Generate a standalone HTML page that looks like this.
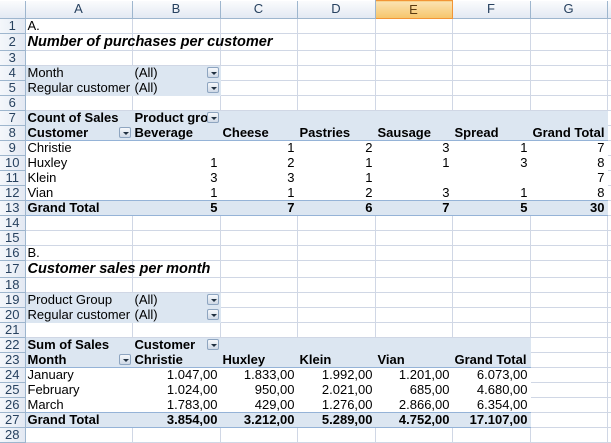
<!DOCTYPE html>
<html><head><meta charset="utf-8"><style>
body{margin:0;width:611px;height:433px;overflow:hidden;background:#fff;font-family:"Liberation Sans",Arial,sans-serif;font-size:13px;color:#000;position:relative}
table{border-collapse:collapse;table-layout:fixed;position:absolute;left:0;top:0;width:617px}
td{padding:0 2px;white-space:nowrap;overflow:hidden;border-right:1px solid #d0d7e5;border-bottom:1px solid #d0d7e5;height:15px;line-height:14px;position:relative;box-sizing:border-box}
tr.h td{height:18px;background:linear-gradient(#fbfcfd,#e3e9f3);border-color:#9eb6ce;text-align:center;color:#27415f;border-bottom:1px solid #9eb6ce}
tr.h td.sel{background:linear-gradient(#fbe3b3,#f6c56a);border:1px solid #f29536;color:#5a3a10}
td.rh{background:linear-gradient(90deg,#f4f7fb,#e3e9f3);border-right:1px solid #9eb6ce;border-bottom:1px solid #9eb6ce;text-align:center;color:#27415f;padding:0}
tr.t td{height:17px}
.p{background:#dce6f1;border-color:#dce6f1}
.w{border-color:#fff}
.r{text-align:right}
.b{font-weight:bold}
.bb{border-bottom:1px solid #95b3d7}
.dd{position:absolute;right:1px;top:1px;width:12px;height:11px;border:1px solid #8ea5c0;border-radius:2px;background:linear-gradient(#f6f8fb,#cfd9e6);box-sizing:border-box}
.dd:after{content:"";position:absolute;left:3px;top:4px;border-left:3px solid transparent;border-right:3px solid transparent;border-top:3px solid #203040}
.ti{font-weight:bold;font-style:italic;font-size:14.5px;overflow:visible}
</style></head><body>
<table>
<colgroup><col style="width:25px"><col style="width:107px"><col style="width:88px"><col style="width:77px"><col style="width:78px"><col style="width:77px"><col style="width:78px"><col style="width:77px"><col style="width:10px"></colgroup>
<tr class="h"><td></td><td>A</td><td>B</td><td>C</td><td>D</td><td class="sel">E</td><td>F</td><td>G</td><td></td></tr>
<tr><td class="rh">1</td><td>A.</td><td></td><td></td><td></td><td></td><td></td><td></td><td></td></tr>
<tr class="t"><td class="rh">2</td><td class="ti">Number of purchases per customer</td><td></td><td></td><td></td><td></td><td></td><td></td><td></td></tr>
<tr><td class="rh">3</td><td></td><td></td><td></td><td></td><td></td><td></td><td></td><td></td></tr>
<tr><td class="rh">4</td><td class="p">Month</td><td class="p">(All)<span class="dd"></span></td><td></td><td></td><td></td><td></td><td></td><td></td></tr>
<tr><td class="rh">5</td><td class="p">Regular customer</td><td class="p">(All)<span class="dd"></span></td><td></td><td></td><td></td><td></td><td></td><td></td></tr>
<tr><td class="rh">6</td><td></td><td></td><td></td><td></td><td></td><td></td><td></td><td></td></tr>
<tr><td class="rh">7</td><td class="p b">Count of Sales</td><td class="p b">Product grou<span class="dd"></span></td><td class="p"></td><td class="p"></td><td class="p"></td><td class="p"></td><td class="p"></td><td></td></tr>
<tr><td class="rh">8</td><td class="p b bb">Customer<span class="dd"></span></td><td class="p b bb">Beverage</td><td class="p b bb">Cheese</td><td class="p b bb">Pastries</td><td class="p b bb">Sausage</td><td class="p b bb">Spread</td><td class="p b bb">Grand Total</td><td></td></tr>
<tr><td class="rh">9</td><td class="w">Christie</td><td class="w r"></td><td class="w r">1</td><td class="w r">2</td><td class="w r">3</td><td class="w r">1</td><td class="w r">7</td><td></td></tr>
<tr><td class="rh">10</td><td class="w">Huxley</td><td class="w r">1</td><td class="w r">2</td><td class="w r">1</td><td class="w r">1</td><td class="w r">3</td><td class="w r">8</td><td></td></tr>
<tr><td class="rh">11</td><td class="w">Klein</td><td class="w r">3</td><td class="w r">3</td><td class="w r">1</td><td class="w r"></td><td class="w r"></td><td class="w r">7</td><td></td></tr>
<tr><td class="rh">12</td><td class="w bb">Vian</td><td class="w r bb">1</td><td class="w r bb">1</td><td class="w r bb">2</td><td class="w r bb">3</td><td class="w r bb">1</td><td class="w r bb">8</td><td></td></tr>
<tr><td class="rh">13</td><td class="p b bb">Grand Total</td><td class="p b r bb">5</td><td class="p b r bb">7</td><td class="p b r bb">6</td><td class="p b r bb">7</td><td class="p b r bb">5</td><td class="p b r bb">30</td><td></td></tr>
<tr><td class="rh">14</td><td></td><td></td><td></td><td></td><td></td><td></td><td></td><td></td></tr>
<tr><td class="rh">15</td><td></td><td></td><td></td><td></td><td></td><td></td><td></td><td></td></tr>
<tr><td class="rh">16</td><td>B.</td><td></td><td></td><td></td><td></td><td></td><td></td><td></td></tr>
<tr class="t"><td class="rh">17</td><td class="ti">Customer sales per month</td><td></td><td></td><td></td><td></td><td></td><td></td><td></td></tr>
<tr><td class="rh">18</td><td></td><td></td><td></td><td></td><td></td><td></td><td></td><td></td></tr>
<tr><td class="rh">19</td><td class="p">Product Group</td><td class="p">(All)<span class="dd"></span></td><td></td><td></td><td></td><td></td><td></td><td></td></tr>
<tr><td class="rh">20</td><td class="p">Regular customer</td><td class="p">(All)<span class="dd"></span></td><td></td><td></td><td></td><td></td><td></td><td></td></tr>
<tr><td class="rh">21</td><td></td><td></td><td></td><td></td><td></td><td></td><td></td><td></td></tr>
<tr><td class="rh">22</td><td class="p b">Sum of Sales</td><td class="p b">Customer<span class="dd"></span></td><td class="p"></td><td class="p"></td><td class="p"></td><td class="p"></td><td></td><td></td></tr>
<tr><td class="rh">23</td><td class="p b bb">Month<span class="dd"></span></td><td class="p b bb">Christie</td><td class="p b bb">Huxley</td><td class="p b bb">Klein</td><td class="p b bb">Vian</td><td class="p b bb">Grand Total</td><td></td><td></td></tr>
<tr><td class="rh">24</td><td class="w">January</td><td class="w r">1.047,00</td><td class="w r">1.833,00</td><td class="w r">1.992,00</td><td class="w r">1.201,00</td><td class="w r">6.073,00</td><td></td><td></td></tr>
<tr><td class="rh">25</td><td class="w">February</td><td class="w r">1.024,00</td><td class="w r">950,00</td><td class="w r">2.021,00</td><td class="w r">685,00</td><td class="w r">4.680,00</td><td></td><td></td></tr>
<tr><td class="rh">26</td><td class="w bb">March</td><td class="w r bb">1.783,00</td><td class="w r bb">429,00</td><td class="w r bb">1.276,00</td><td class="w r bb">2.866,00</td><td class="w r bb">6.354,00</td><td></td><td></td></tr>
<tr><td class="rh">27</td><td class="p b bb">Grand Total</td><td class="p b r bb">3.854,00</td><td class="p b r bb">3.212,00</td><td class="p b r bb">5.289,00</td><td class="p b r bb">4.752,00</td><td class="p b r bb">17.107,00</td><td></td><td></td></tr>
<tr><td class="rh">28</td><td></td><td></td><td></td><td></td><td></td><td></td><td></td><td></td></tr>
</table>
</body></html>
